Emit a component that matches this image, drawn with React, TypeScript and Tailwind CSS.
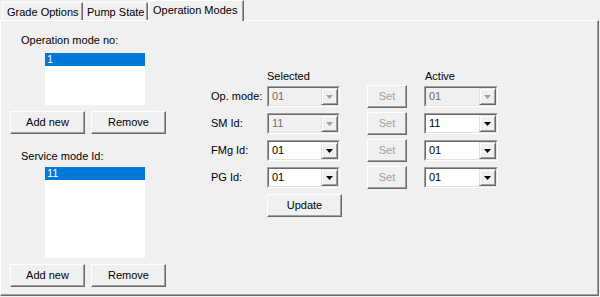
import React from "react";

function Btn({ w, children, disabled }: { w: string; children: React.ReactNode; disabled?: boolean }) {
  return (
    <div
      className={
        w +
        " h-[23px] shrink-0 flex items-center justify-center bg-[#f0f0f0] border border-t-white border-l-white border-r-[#696969] border-b-[#696969] shadow-[inset_-1px_-1px_0_#a0a0a0] " +
        (disabled ? "text-[#a0a0a0]" : "text-black")
      }
    >
      {children}
    </div>
  );
}

function Combo({ w, value, disabled }: { w: string; value: string; disabled?: boolean }) {
  return (
    <div className={w + " h-[21px] shrink-0 flex border border-t-[#a0a0a0] border-l-[#a0a0a0] border-r-white border-b-white"}>
      <div
        className={
          "flex flex-1 border border-t-[#696969] border-l-[#696969] border-r-[#e3e3e3] border-b-[#e3e3e3] " +
          (disabled ? "bg-[#f0f0f0]" : "bg-white")
        }
      >
        <span className={"flex-1 pl-[3px] leading-[17px] " + (disabled ? "text-[#6d6d6d]" : "text-black")}>{value}</span>
        <div className="w-[17px] h-[17px] bg-[#f0f0f0] border border-t-[#e3e3e3] border-l-[#e3e3e3] border-r-[#696969] border-b-[#696969] shadow-[inset_1px_1px_0_white,inset_-1px_-1px_0_#a0a0a0] flex items-center justify-center">
          <svg width="7" height="4" viewBox="0 0 7 4">
            <path d="M0 0H7L3.5 4Z" fill={disabled ? "#a0a0a0" : "#000"} />
          </svg>
        </div>
      </div>
    </div>
  );
}

function Row({ label, sel, selDisabled, act, actDisabled }: { label: string; sel: string; selDisabled?: boolean; act: string; actDisabled?: boolean }) {
  return (
    <div className="flex items-center h-[21px]">
      <span className="w-[56px] shrink-0">{label}</span>
      <Combo w="w-[73px]" value={sel} disabled={selDisabled} />
      <div className="ml-[27px]">
        <Btn w="w-[40px]" disabled>
          Set
        </Btn>
      </div>
      <div className="ml-[17px]">
        <Combo w="w-[74px]" value={act} disabled={actDisabled} />
      </div>
    </div>
  );
}

export default function App() {
  return (
    <div className="w-[600px] h-[297px] bg-[#f0f0f0] text-[11px] leading-[13px] text-black font-['Liberation_Sans',Arial,sans-serif] overflow-hidden">
      {/* tab strip */}
      <div className="flex items-end h-[20px] pl-[2px] relative z-10">
        <div className="w-[81px] h-[18px] pl-[4px] pt-[1px] flex items-center border-t border-l border-white border-r border-r-[#696969] shadow-[inset_-1px_0_0_#a0a0a0]">
          Grade Options
        </div>
        <div className="w-[65px] h-[18px] pl-[4px] pt-[1px] flex items-center border-t border-white border-r border-r-[#696969] shadow-[inset_-1px_0_0_#a0a0a0]">
          Pump State
        </div>
        <div className="w-[96px] h-[21px] -mb-px pl-[4px] pb-[1px] flex items-center bg-[#f0f0f0] border-t border-l border-white border-r border-r-[#696969] shadow-[inset_-1px_0_0_#a0a0a0]">
          Operation Modes
        </div>
      </div>
      {/* panel */}
      <div className="w-[599px] h-[276px] flex border-t border-l border-white border-r border-b border-r-[#696969] border-b-[#696969] shadow-[inset_-1px_-1px_0_#a0a0a0]">
        <div className="w-[210px] shrink-0 flex flex-col">
          <span className="ml-[20px] mt-[13px]">Operation mode no:</span>
          <div className="ml-[44px] mt-[6px] w-[100px] h-[52px] bg-white">
            <div className="h-[13px] bg-[#0078d7] text-white pl-[2px]">1</div>
          </div>
          <div className="ml-[9px] mt-[6px] flex gap-[6px]">
            <Btn w="w-[75px]">Add new</Btn>
            <Btn w="w-[75px]">Remove</Btn>
          </div>
          <span className="ml-[20px] mt-[16px]">Service mode Id:</span>
          <div className="ml-[44px] mt-[4px] w-[100px] h-[91px] bg-white">
            <div className="h-[13px] bg-[#0078d7] text-white pl-[2px]">11</div>
          </div>
          <div className="ml-[9px] mt-[6px] flex gap-[6px]">
            <Btn w="w-[75px]">Add new</Btn>
            <Btn w="w-[75px]">Remove</Btn>
          </div>
        </div>
        <div className="flex flex-col pt-[49px]">
          <div className="flex h-[13px]">
            <span className="w-[56px] shrink-0" />
            <span className="w-[157px] shrink-0">Selected</span>
            <span className="pl-[1px]">Active</span>
          </div>
          <div className="mt-[3px] flex flex-col gap-[6px]">
            <Row label="Op. mode:" sel="01" selDisabled act="01" actDisabled />
            <Row label="SM Id:" sel="11" selDisabled act="11" />
            <Row label="FMg Id:" sel="01" act="01" />
            <Row label="PG Id:" sel="01" act="01" />
          </div>
          <div className="mt-[6px] ml-[56px]">
            <Btn w="w-[75px]">Update</Btn>
          </div>
        </div>
      </div>
    </div>
  );
}
